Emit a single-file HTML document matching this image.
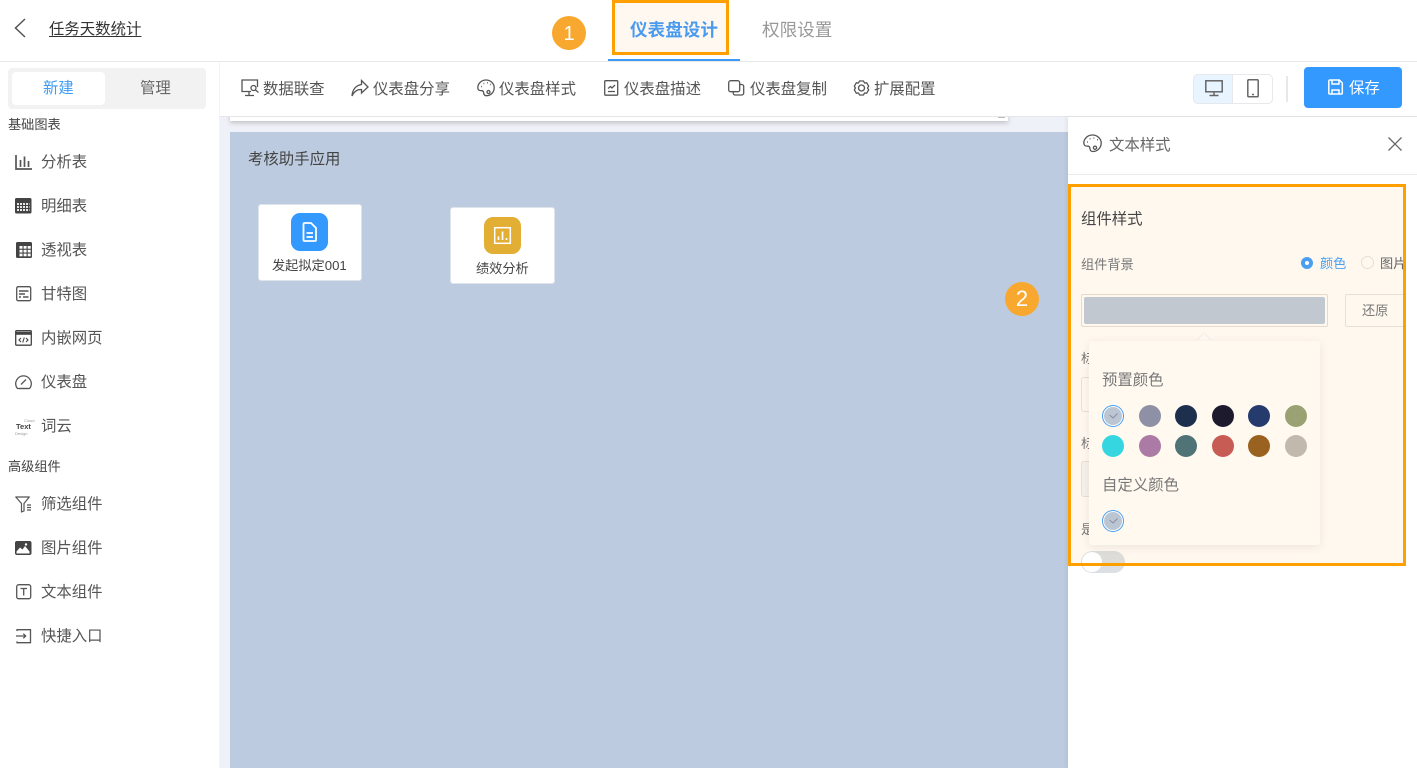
<!DOCTYPE html>
<html lang="zh-CN">
<head>
<meta charset="utf-8">
<title>仪表盘设计</title>
<style>
html,body{margin:0;padding:0;background:#fff}
body{width:1417px;height:768px;position:relative;overflow:hidden;font-family:"Liberation Sans","Noto Sans CJK SC",sans-serif;color:#555}
.a{position:absolute;box-sizing:border-box}
.t{position:absolute;white-space:nowrap;line-height:20px;height:20px;font-size:15.4px;color:#555;margin-top:1px}
.s{font-size:13.2px}
svg{position:absolute;overflow:visible}
.i{fill:none;stroke:#555;stroke-width:1.3}
.sw{position:absolute;width:22px;height:22px;border-radius:50%}
.sel{box-shadow:inset 0 0 0 1px #4a9ff0,inset 0 0 0 2px #fff}
</style>
</head>
<body>
<!-- canvas -->
<div class="a" style="left:220px;top:117px;width:848px;height:651px;background:#eef1f7"></div>
<div class="a" style="left:230px;top:112px;width:778px;height:9px;background:#fff;box-shadow:0 2px 5px rgba(0,0,0,.2)"></div>
<div class="a" style="left:998px;top:117px;width:7px;height:1px;background:#bbb"></div>
<div class="a" style="left:230px;top:132px;width:838px;height:636px;background:#bccbdf"></div>
<div class="t" style="left:248px;top:149px;color:#444">考核助手应用</div>

<div class="a" style="left:258px;top:204px;width:104px;height:77px;background:#fff;border:1px solid #dfe3ea;border-radius:3px"></div>
<div class="a" style="left:291px;top:213px;width:37px;height:38px;background:#3399ff;border-radius:9px"></div>
<svg style="left:291px;top:213px" width="37" height="38" fill="none" stroke="#fff" stroke-width="1.8"><path d="M12.500 11a1 1 0 0 1 1-1h6.500l5 5v12a1 1 0 0 1-1 1h-10.500a1 1 0 0 1-1-1z"/><path d="M15.500 20h6.500M15.500 24h6.500"/></svg>
<div class="t s" style="left:272px;top:255px;color:#444">发起拟定001</div>

<div class="a" style="left:450px;top:207px;width:105px;height:77px;background:#fff;border:1px solid #dfe3ea;border-radius:3px"></div>
<div class="a" style="left:484px;top:217px;width:37px;height:37px;background:#e2ae33;border-radius:9px"></div>
<svg style="left:484px;top:217px" width="37" height="37" fill="none" stroke="#fff"><rect x="10.700" y="10.700" width="15.600" height="15.600" stroke-width="1.500"/><path d="M14.500 23v-3.500M18.500 23v-8.500M22.500 23v-2" stroke-width="1.700"/></svg>
<div class="t s" style="left:476px;top:258px;color:#444">绩效分析</div>

<!-- header -->
<div class="a" style="left:0;top:0;width:1417px;height:61px;background:#fff"></div>
<div class="a" style="left:0;top:61px;width:1417px;height:1px;background:#e8e8e8"></div>
<svg style="left:14px;top:18px" width="14" height="20" fill="none" stroke="#555" stroke-width="1.500"><path d="M11 1L1.500 10L11 19"/></svg>
<div class="t" style="left:49px;top:19px;color:#333;text-decoration:underline;text-underline-offset:2px">任务天数统计</div>
<div class="a" style="left:552px;top:16px;width:34px;height:34px;border-radius:50%;background:#f9a82f"></div>
<div class="t" style="left:552px;top:21px;width:34px;text-align:center;color:#fff;font-size:20px;line-height:24px;height:24px">1</div>
<div class="a" style="left:612px;top:0;width:117px;height:55px;background:#fff8f0;border:3px solid #ff9f00"></div>
<div class="t" style="left:630px;top:19px;font-size:17.6px;font-weight:700;color:#4a9bf0">仪表盘设计</div>
<div class="t" style="left:762px;top:19px;font-size:17.6px;color:#999">权限设置</div>
<div class="a" style="left:608px;top:59px;width:132px;height:2px;background:#3d9bf5"></div>

<!-- toolbar -->
<div class="a" style="left:220px;top:62px;width:1197px;height:55px;background:#fff;border-bottom:1px solid #e4e6ea"></div>
<svg class="i" style="left:241px;top:79px" width="19" height="18"><path d="M16.500 8V1H1v11.500h9M8 12.500V16M4 16.500h9"/><circle cx="12.500" cy="9" r="2.500"/><path d="M14.500 11l3 2.500"/></svg>
<div class="t" style="left:263px;top:79px">数据联查</div>
<svg class="i" style="left:351px;top:79px" width="18" height="18"><path d="M10.500 1.500L17 8l-6.500 6v-3.500C6 10.300 3 12.500 1 17c.3-6 3.500-10.500 9.500-11.500z"/></svg>
<div class="t" style="left:373px;top:79px">仪表盘分享</div>
<svg class="i" style="left:477px;top:79px" width="18" height="18"><path d="M9 1C4.500 1 .8 4.400.8 8.700c0 3 2.500 3 4 3 2 0 1.700 1.700 2 3 .4 1.500 1.500 2 2.500 2 4.500 0 7.900-3.500 7.900-8C17.200 4.400 13.500 1 9 1z"/><circle cx="11.500" cy="13" r="1.500"/><path d="M4 7.500h.8M6.500 4.500h.8M10 3.800h.8M13.300 5.500h.8" stroke-width="1.500"/></svg>
<div class="t" style="left:499px;top:79px">仪表盘样式</div>
<svg class="i" style="left:604px;top:80px" width="15" height="16"><rect x=".7" y=".7" width="13" height="14.500" rx="1"/><path d="M4 8.500L6.500 6.500 8 8 11 5M4 11.500h7"/></svg>
<div class="t" style="left:624px;top:79px">仪表盘描述</div>
<svg class="i" style="left:728px;top:80px" width="17" height="16"><rect x=".7" y=".7" width="11" height="11" rx="2"/><path d="M11.700 4.500h2a2 2 0 0 1 2 2v6.500a2 2 0 0 1-2 2h-6.500a2 2 0 0 1-2-2v-1.300"/></svg>
<div class="t" style="left:750px;top:79px">仪表盘复制</div>
<svg class="i" style="left:853px;top:80px" width="17" height="16"><path d="M6.500 1h4l1 2 2.200-.2 2 3.400-1.200 1.800 1.200 1.800-2 3.400-2.200-.2-1 2h-4l-1-2-2.200.2-2-3.400 1.200-1.800-1.200-1.800 2-3.400 2.200.2z" stroke-linejoin="round"/><circle cx="8.500" cy="8" r="3"/></svg>
<div class="t" style="left:874px;top:79px">扩展配置</div>

<div class="a" style="left:1193px;top:74px;width:80px;height:30px;border:1px solid #e6e8ec;border-radius:5px;background:#fff"></div>
<div class="a" style="left:1193px;top:74px;width:40px;height:30px;border:1px solid #e6e8ec;border-radius:5px 0 0 5px;background:#e8f4ff"></div>
<svg class="i" style="left:1205px;top:80px;stroke:#666;stroke-width:1.500" width="18" height="17"><rect x=".8" y=".8" width="16.400" height="11"/><path d="M9 12v3M4.500 15.500h9"/></svg>
<svg class="i" style="left:1247px;top:79px;stroke:#666;stroke-width:1.500" width="12" height="19"><rect x=".8" y=".8" width="10.400" height="17" rx="1"/><path d="M5 15.500h2"/></svg>
<div class="a" style="left:1286px;top:76px;width:2px;height:26px;background:#e6e8ec"></div>
<div class="a" style="left:1304px;top:67px;width:98px;height:41px;background:#3399ff;border-radius:4px"></div>
<svg style="left:1328px;top:79px" width="15" height="16" fill="none" stroke="#fff" stroke-width="1.500"><path d="M.8 2a1 1 0 0 1 1-1h9.500l3 3v10a1 1 0 0 1-1 1h-11.500a1 1 0 0 1-1-1z"/><path d="M4 1v4h7V1M4 15v-4h7v4"/></svg>
<div class="t" style="left:1349px;top:78px;color:#fff">保存</div>

<!-- sidebar -->
<div class="a" style="left:0;top:62px;width:219px;height:706px;background:#fff"></div>
<div class="a" style="left:219px;top:62px;width:1px;height:706px;background:#f3f3f3"></div>
<div class="a" style="left:8px;top:68px;width:198px;height:41px;background:#f2f2f2;border-radius:4px"></div>
<div class="a" style="left:12px;top:72px;width:93px;height:33px;background:#fff;border-radius:4px"></div>
<div class="t" style="left:43px;top:78px;color:#3d9bf5">新建</div>
<div class="t" style="left:140px;top:78px;color:#666">管理</div>
<div class="t s" style="left:8px;top:114px;color:#444">基础图表</div>
<div class="t s" style="left:8px;top:456px;color:#444">高级组件</div>

<svg style="left:15px;top:154px" width="17" height="16" fill="none" stroke="#555" stroke-width="1.700"><path d="M1 1v14h16M5.500 6v7M9.500 2.500v10.500M13.500 7v6"/></svg>
<div class="t" style="left:41px;top:152px">分析表</div>
<svg style="left:15px;top:198px" width="17" height="16"><rect width="16.500" height="15.500" rx="1.500" fill="#444"/><path d="M2 6h12.500M2 9h12.500M2 12h12.500" stroke="#fff" stroke-width="1.700" stroke-dasharray="2 1" fill="none"/></svg>
<div class="t" style="left:41px;top:196px">明细表</div>
<svg style="left:16px;top:242px" width="16" height="16"><rect width="16" height="16" rx="1.500" fill="#444"/><g fill="#fff"><rect x="3.500" y="4" width="3" height="2.700"/><rect x="7.600" y="4" width="3" height="2.700"/><rect x="11.700" y="4" width="3" height="2.700"/><rect x="3.500" y="7.800" width="3" height="2.700"/><rect x="7.600" y="7.800" width="3" height="2.700"/><rect x="11.700" y="7.800" width="3" height="2.700"/><rect x="3.500" y="11.600" width="3" height="2.700"/><rect x="7.600" y="11.600" width="3" height="2.700"/><rect x="11.700" y="11.600" width="3" height="2.700"/></g></svg>
<div class="t" style="left:41px;top:240px">透视表</div>
<svg style="left:16px;top:286px" width="15" height="16" fill="none" stroke="#555"><rect x=".7" y=".7" width="14" height="14" rx="1.500" stroke-width="1.300"/><path d="M3 5h9.500M3 8h6M3 11h2M7 11h5.500" stroke-width="1.500"/></svg>
<div class="t" style="left:41px;top:284px">甘特图</div>
<svg style="left:15px;top:330px" width="17" height="16" fill="none" stroke="#444"><rect x=".7" y=".7" width="15.600" height="14.500" rx="1" stroke-width="1.300"/><path d="M1 3.300h15" stroke-width="3"/><path d="M6 8l-2 2 2 2M11 8l2 2-2 2M9.300 7.500l-1.600 5" stroke-width="1.100"/></svg>
<div class="t" style="left:41px;top:328px">内嵌网页</div>
<svg style="left:15px;top:375px" width="17" height="15" fill="none" stroke="#555" stroke-width="1.300"><path d="M4 13.500H2.500C1.200 12 .7 10.500.7 8.700a7.800 7.800 0 0 1 15.600 0c0 1.800-.5 3.300-1.800 4.800H13z"/><path d="M6 9.500l5-5M4 13.500h9"/></svg>
<div class="t" style="left:41px;top:372px">仪表盘</div>
<div class="t" style="left:16px;top:422px;font-size:7.500px;font-weight:700;line-height:8px;height:8px;color:#444">Text</div>
<div class="t" style="left:24px;top:417px;font-size:4px;line-height:5px;height:5px;color:#999">Cloud</div>
<div class="t" style="left:15px;top:430px;font-size:4px;line-height:5px;height:5px;color:#999">Design</div>
<div class="t" style="left:41px;top:416px">词云</div>

<svg style="left:15px;top:496px" width="17" height="17" fill="none" stroke="#555" stroke-width="1.200"><path d="M.8 1h13.500L9 7.500V15l-2.500 1V7.500z" stroke-linejoin="round"/><path d="M12 9h4M12 11.500h4M12 14h4"/></svg>
<div class="t" style="left:41px;top:494px">筛选组件</div>
<svg style="left:15px;top:541px" width="17" height="15"><rect width="16.500" height="14" rx="2" fill="#444"/><path d="M1.500 10.500l3.500-4 2.500 2 2.500-3.500 4.500 5.500v2H1.500z" fill="#fff"/><circle cx="11" cy="3.500" r="1.200" fill="#fff"/></svg>
<div class="t" style="left:41px;top:538px">图片组件</div>
<svg style="left:16px;top:584px" width="15" height="16" fill="none" stroke="#555" stroke-width="1.300"><rect x=".7" y=".7" width="14" height="14" rx="2"/><path d="M4.500 4.500h6.500M7.700 4.500v7"/></svg>
<div class="t" style="left:41px;top:582px">文本组件</div>
<svg style="left:16px;top:629px" width="15" height="15" fill="none" stroke="#555" stroke-width="1.300"><path d="M1 2V.7h13.500v13H1v-1.300M0 7h9.500M7.300 4.700L9.700 7 7.300 9.300"/></svg>
<div class="t" style="left:41px;top:626px">快捷入口</div>

<!-- right panel -->
<div class="a" style="left:1068px;top:117px;width:349px;height:651px;background:#fff;box-shadow:-2px 0 4px rgba(0,0,0,.05)"></div>
<div class="a" style="left:1068px;top:174px;width:349px;height:1px;background:#ebebeb"></div>
<svg class="i" style="left:1083px;top:134px" width="19" height="19"><path d="M9.500 1C4.800 1 .8 4.600.8 9c0 3.200 2.700 3.200 4.200 3.200 2.100 0 1.800 1.800 2.100 3.200.4 1.600 1.600 2.100 2.600 2.100 4.800 0 8.500-3.700 8.500-8.500C18.200 4.600 14.200 1 9.500 1z"/><circle cx="12" cy="13.700" r="1.600"/><path d="M4 8h.8M6.700 4.800h.8M10.500 4h.8M14 5.800h.8" stroke-width="1.500"/></svg>
<div class="t" style="left:1109px;top:135px;color:#666">文本样式</div>
<svg style="left:1388px;top:137px" width="14" height="14" fill="none" stroke="#666" stroke-width="1.300"><path d="M.5.500l13 13M13.500.500l-13 13"/></svg>

<div class="a" style="left:1068px;top:184px;width:338px;height:382px;background:#fff8ef;border:3px solid #ff9f00;overflow:hidden">
  <div class="t" style="left:10px;top:22px;color:#444">组件样式</div>
  <div class="t s" style="left:10px;top:67px;color:#777">组件背景</div>
  <div class="a" style="left:230px;top:70px;width:12px;height:12px;border-radius:50%;background:#fff;border:4px solid #4a9ff0"></div>
  <div class="t s" style="left:249px;top:66px;color:#4a9ff0">颜色</div>
  <div class="a" style="left:290px;top:69px;width:13px;height:13px;border-radius:50%;background:#fff8ef;border:1px solid #e4dfd8"></div>
  <div class="t s" style="left:309px;top:66px;color:#666">图片</div>
  <div class="a" style="left:10px;top:107px;width:247px;height:33px;border:1px solid #e5dacc;border-radius:2px"></div>
  <div class="a" style="left:13px;top:110px;width:241px;height:27px;background:#c1c8d0;border-radius:2px"></div>
  <div class="a" style="left:274px;top:107px;width:70px;height:33px;border:1px solid #e8e0d5;border-radius:2px"></div>
  <div class="t s" style="left:291px;top:113px;color:#777">还原</div>
  <div class="t s" style="left:10px;top:161px;color:#777">标题</div>
  <div class="a" style="left:10px;top:190px;width:40px;height:35px;border:1px solid #e8e0d5;border-radius:3px"></div>
  <div class="t s" style="left:10px;top:246px;color:#777">标题</div>
  <div class="a" style="left:10px;top:274px;width:40px;height:36px;border:1px solid #e8e0d5;border-radius:3px;background:#f6f1ea"></div>
  <div class="t s" style="left:10px;top:332px;color:#777">是否</div>
</div>
<div class="a" style="left:1081px;top:551px;width:44px;height:22px;border-radius:11px;background:linear-gradient(#dedcd8 0,#dedcd8 12px,#dcdfe4 12px)"></div>
<div class="a" style="left:1082px;top:552px;width:20px;height:20px;border-radius:50%;background:#fff"></div>
<div class="a" style="left:1068px;top:563px;width:338px;height:3px;background:#ff9f00"></div>

<!-- popover -->
<div class="a" style="left:1199px;top:336px;width:10px;height:10px;background:#fffaf3;transform:rotate(45deg);box-shadow:-1px -1px 2px rgba(0,0,0,.05)"></div>
<div class="a" style="left:1089px;top:341px;width:231px;height:204px;background:#fff9f0;border-radius:3px;box-shadow:0 2px 10px rgba(0,0,0,.08)"></div>
<div class="t" style="left:1102px;top:370px;color:#777">预置颜色</div>
<div class="sw sel" style="left:1102px;top:405px;background:#bcc6d2"></div>
<div class="sw" style="left:1139px;top:405px;background:#8e90a5"></div>
<div class="sw" style="left:1175px;top:405px;background:#1c2f4c"></div>
<div class="sw" style="left:1212px;top:405px;background:#1e1a2e"></div>
<div class="sw" style="left:1248px;top:405px;background:#253b6e"></div>
<div class="sw" style="left:1285px;top:405px;background:#9aa274"></div>
<div class="sw" style="left:1102px;top:435px;background:#36d6e0"></div>
<div class="sw" style="left:1139px;top:435px;background:#ab7ba5"></div>
<div class="sw" style="left:1175px;top:435px;background:#4f7376"></div>
<div class="sw" style="left:1212px;top:435px;background:#c75c54"></div>
<div class="sw" style="left:1248px;top:435px;background:#9a6220"></div>
<div class="sw" style="left:1285px;top:435px;background:#c1b8ae"></div>
<svg style="left:1109px;top:413px" width="9" height="6" fill="none" stroke="#8e90a5" stroke-width="1.100"><path d="M.5 2l3.500 3L8.500.5"/></svg>
<div class="t" style="left:1102px;top:475px;color:#777">自定义颜色</div>
<div class="sw sel" style="left:1102px;top:510px;background:#bcc6d2"></div>
<svg style="left:1109px;top:518px" width="9" height="6" fill="none" stroke="#8e90a5" stroke-width="1.100"><path d="M.5 2l3.500 3L8.500.5"/></svg>

<div class="a" style="left:1005px;top:282px;width:34px;height:34px;border-radius:50%;background:#f9a82f"></div>
<div class="t" style="left:1005px;top:286px;width:34px;text-align:center;color:#fff;font-size:22px;line-height:24px;height:24px">2</div>
</body>
</html>
